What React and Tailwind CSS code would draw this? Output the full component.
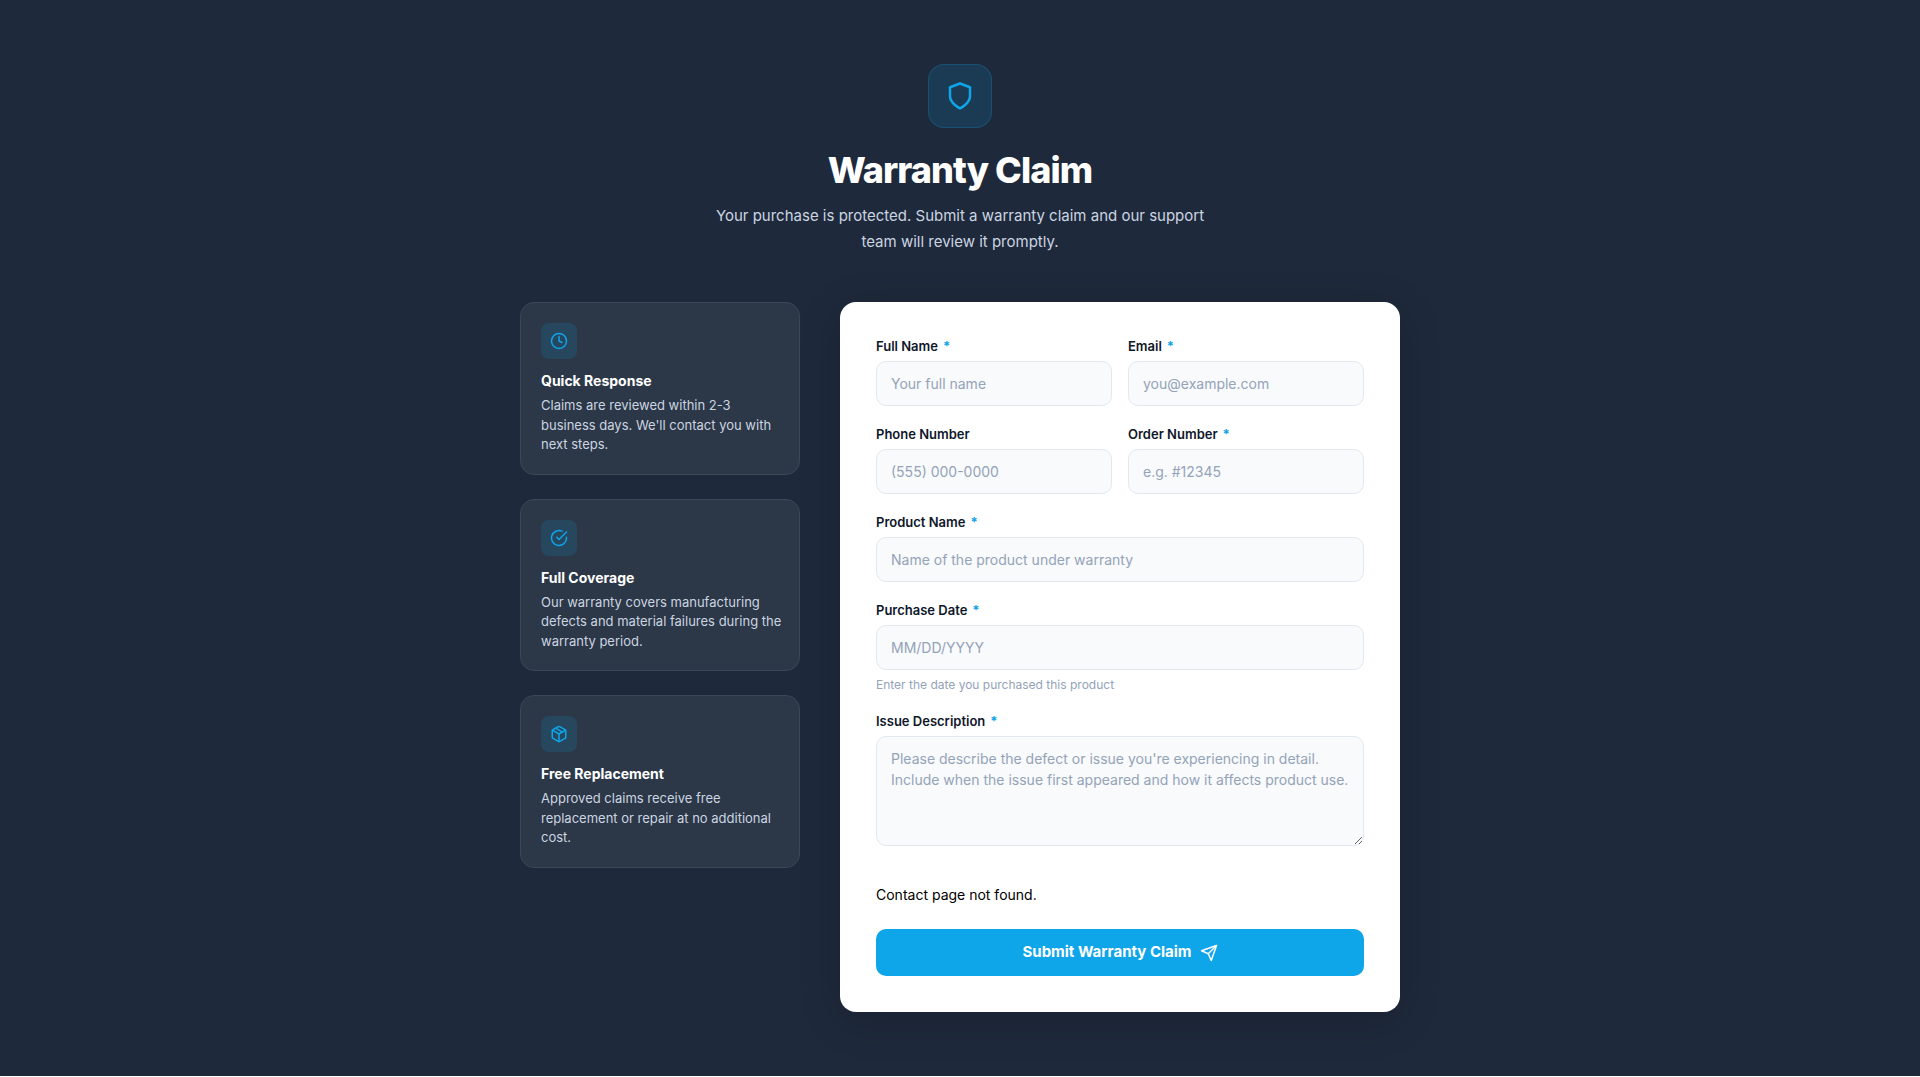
const FEATURES = [
  {
    title: "Quick Response",
    text: "Claims are reviewed within 2-3 business days. We'll contact you with next steps.",
    icon: (
      <>
        <circle cx="12" cy="12" r="10" />
        <polyline points="12 6 12 12 16 14" />
      </>
    ),
  },
  {
    title: "Full Coverage",
    text: "Our warranty covers manufacturing defects and material failures during the warranty period.",
    icon: (
      <>
        <path d="M22 11.08V12a10 10 0 1 1-5.93-9.14" />
        <polyline points="22 4 12 14.01 9 11.01" />
      </>
    ),
  },
  {
    title: "Free Replacement",
    text: "Approved claims receive free replacement or repair at no additional cost.",
    icon: (
      <>
        <line x1="16.5" y1="9.4" x2="7.5" y2="4.21" />
        <path d="M21 16V8a2 2 0 0 0-1-1.73l-7-4a2 2 0 0 0-2 0l-7 4A2 2 0 0 0 3 8v8a2 2 0 0 0 1 1.73l7 4a2 2 0 0 0 2 0l7-4A2 2 0 0 0 21 16z" />
        <polyline points="3.27 6.96 12 12.01 20.73 6.96" />
        <line x1="12" y1="22.08" x2="12" y2="12" />
      </>
    ),
  },
];

const inputClass =
  "block w-full rounded-[10px] border border-[#e2e8f0] bg-[#f8fafc] px-3.5 py-[11px] text-sm leading-[21px] text-[#0f172a] placeholder:text-[#94a3b8] focus:border-[#0ea5e9] focus:outline-none";

const Icon = ({ size = 18, className, children }) => (
  <svg
    width={size}
    height={size}
    viewBox="0 0 24 24"
    fill="none"
    stroke="currentColor"
    strokeWidth="2"
    strokeLinecap="round"
    strokeLinejoin="round"
    className={className}
    aria-hidden="true"
  >
    {children}
  </svg>
);

const Field = ({ id, label, required, hint, children }) => (
  <div>
    <label htmlFor={id} className="mb-1.5 flex gap-[5px] text-[13px] leading-[17px] font-semibold text-[#0f172a]">
      {label}
      {required && <span className="font-bold text-[#0ea5e9]">*</span>}
    </label>
    {children}
    {hint && <p className="mt-1.5 text-xs leading-[17px] text-[#94a3b8]">{hint}</p>}
  </div>
);

const FeatureCard = ({ feature }) => (
  <div className="rounded-[14px] border border-[#3b4656] bg-[#2c3747] pt-5 pr-4 pb-[19px] pl-5">
    <div className="mb-3 flex size-9 items-center justify-center rounded-lg bg-[#0ea5e9]/15 text-[#0ea5e9]">
      <Icon>{feature.icon}</Icon>
    </div>
    <h3 className="mb-1.5 text-sm leading-[19px] font-bold text-white">{feature.title}</h3>
    <p className="text-[13px] leading-normal text-[#cbd5e1]">{feature.text}</p>
  </div>
);

const App = () => {
  return (
    <main className="bg-[#1e293b] px-6 py-16 font-['Inter',sans-serif]">
      {/* Header */}
      <header className="mb-[47px] flex flex-col items-center text-center">
        <div className="mb-5 flex size-16 items-center justify-center rounded-2xl border border-[#0ea5e9]/20 bg-[#0ea5e9]/15 text-[#0ea5e9]">
          <Icon size={30}>
            <path d="M12 22s8-4 8-10V5l-8-3-8 3v7c0 6 8 10 8 10z" />
          </Icon>
        </div>
        <h1 className="mb-2.5 text-4xl leading-[45px] font-extrabold tracking-tight text-white">Warranty Claim</h1>
        <p className="max-w-[520px] text-[15px] leading-[26px] text-[#cbd5e1]">
          Your purchase is protected. Submit a warranty claim and our support team will review it promptly.
        </p>
      </header>

      <div className="mx-auto grid max-w-[880px] items-start gap-10 md:grid-cols-[280px_1fr]">
        {/* Benefits */}
        <aside className="flex flex-col gap-6">
          {FEATURES.map((feature) => (
            <FeatureCard key={feature.title} feature={feature} />
          ))}
        </aside>

        {/* Claim form */}
        <form
          className="rounded-2xl bg-white p-9 shadow-[0_8px_40px_rgba(0,0,0,0.18)]"
          onSubmit={(e) => e.preventDefault()}
        >
          <div className="flex flex-col gap-5">
            <div className="grid gap-x-4 gap-y-5 sm:grid-cols-2">
              <Field id="name" label="Full Name" required>
                <input id="name" type="text" placeholder="Your full name" className={inputClass} />
              </Field>
              <Field id="email" label="Email" required>
                <input id="email" type="email" placeholder="you@example.com" className={inputClass} />
              </Field>
              <Field id="phone" label="Phone Number">
                <input id="phone" type="tel" placeholder="(555) 000-0000" className={inputClass} />
              </Field>
              <Field id="order" label="Order Number" required>
                <input id="order" type="text" placeholder="e.g. #12345" className={inputClass} />
              </Field>
            </div>
            <Field id="product" label="Product Name" required>
              <input id="product" type="text" placeholder="Name of the product under warranty" className={inputClass} />
            </Field>
            <Field id="date" label="Purchase Date" required hint="Enter the date you purchased this product">
              <input id="date" type="text" placeholder="MM/DD/YYYY" className={inputClass} />
            </Field>
            <Field id="issue" label="Issue Description" required>
              <textarea
                id="issue"
                placeholder="Please describe the defect or issue you're experiencing in detail. Include when the issue first appeared and how it affects product use."
                className={`${inputClass} h-[110px] resize-y`}
              />
            </Field>
          </div>

          <p className="mt-[38px] mb-6 text-sm leading-[21px] text-black">Contact page not found.</p>

          <button
            type="submit"
            className="flex h-[47px] w-full items-center justify-center gap-2 rounded-[10px] bg-[#0ea5e9] text-[15px] font-bold text-white hover:bg-[#0284c7]"
          >
            Submit Warranty Claim
            <Icon>
              <line x1="22" y1="2" x2="11" y2="13" />
              <polygon points="22 2 15 22 11 13 2 9 22 2" />
            </Icon>
          </button>
        </form>
      </div>
    </main>
  );
};

export default App;
